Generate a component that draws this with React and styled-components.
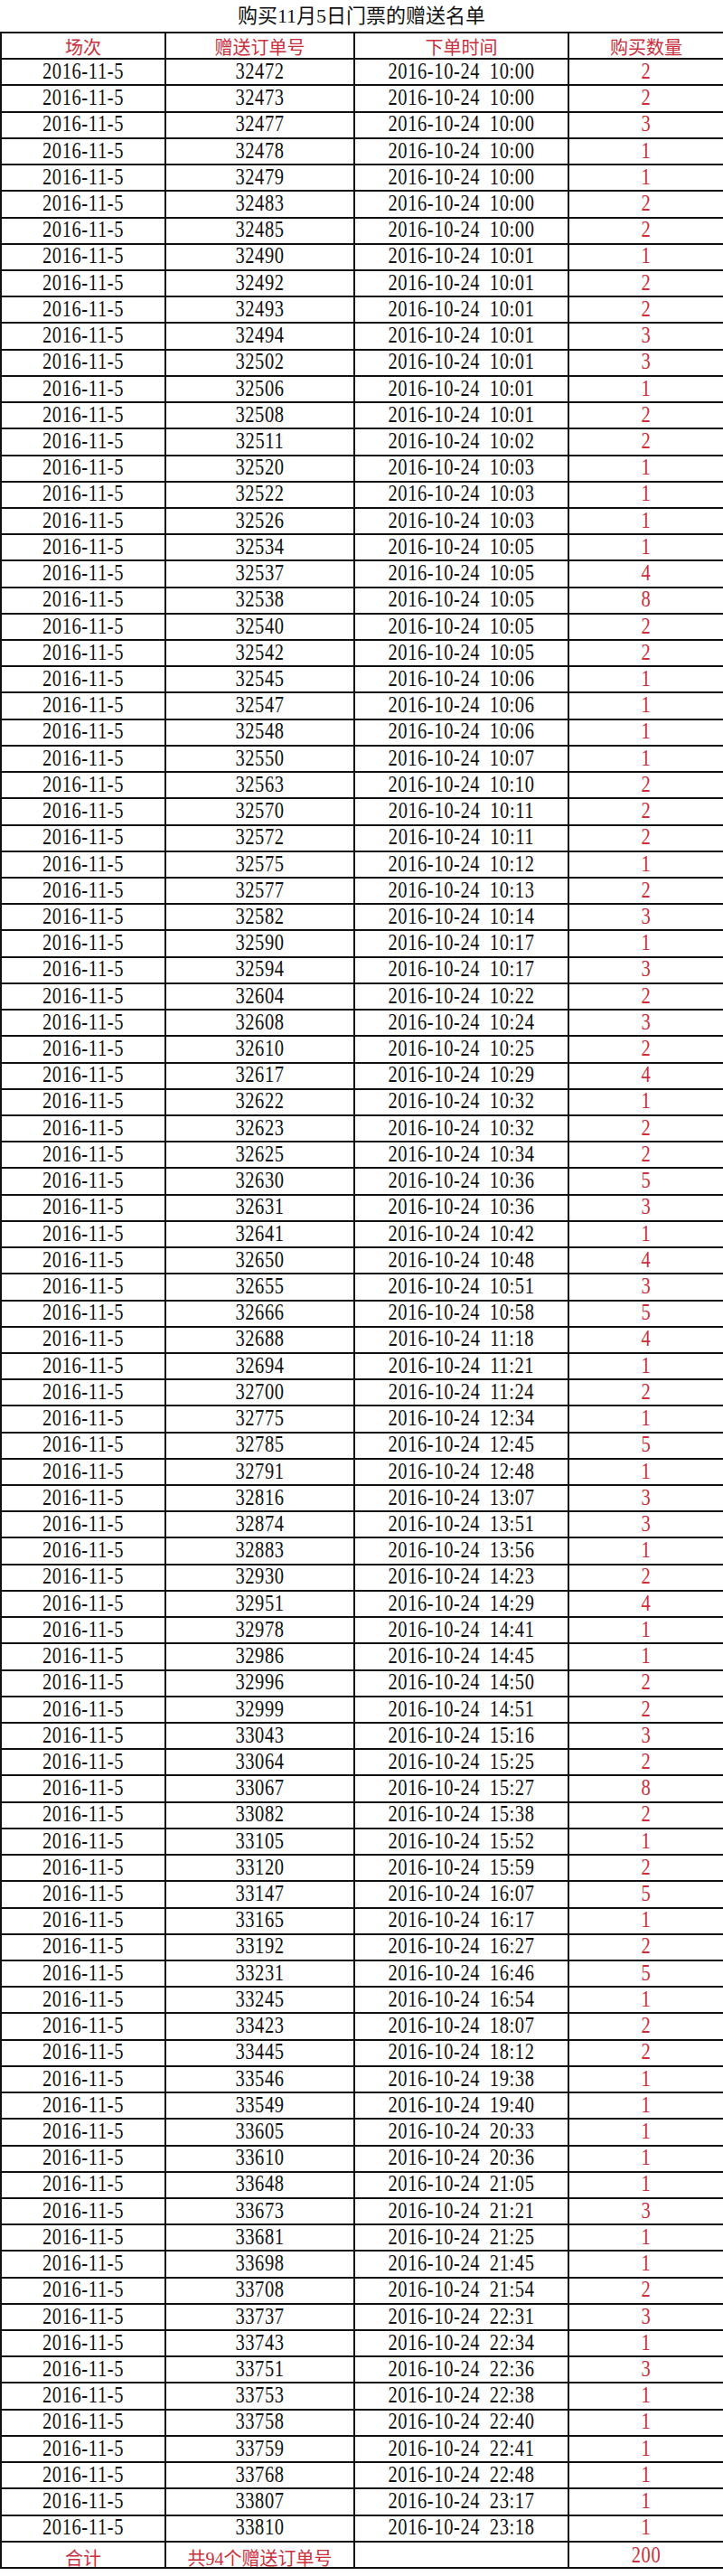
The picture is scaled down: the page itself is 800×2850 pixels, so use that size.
import React from "react";
import styled, { createGlobalStyle } from "styled-components";

const orders = [
  [32472, "10:00", 2], [32473, "10:00", 2], [32477, "10:00", 3], [32478, "10:00", 1],
  [32479, "10:00", 1], [32483, "10:00", 2], [32485, "10:00", 2], [32490, "10:01", 1],
  [32492, "10:01", 2], [32493, "10:01", 2], [32494, "10:01", 3], [32502, "10:01", 3],
  [32506, "10:01", 1], [32508, "10:01", 2], [32511, "10:02", 2], [32520, "10:03", 1],
  [32522, "10:03", 1], [32526, "10:03", 1], [32534, "10:05", 1], [32537, "10:05", 4],
  [32538, "10:05", 8], [32540, "10:05", 2], [32542, "10:05", 2], [32545, "10:06", 1],
  [32547, "10:06", 1], [32548, "10:06", 1], [32550, "10:07", 1], [32563, "10:10", 2],
  [32570, "10:11", 2], [32572, "10:11", 2], [32575, "10:12", 1], [32577, "10:13", 2],
  [32582, "10:14", 3], [32590, "10:17", 1], [32594, "10:17", 3], [32604, "10:22", 2],
  [32608, "10:24", 3], [32610, "10:25", 2], [32617, "10:29", 4], [32622, "10:32", 1],
  [32623, "10:32", 2], [32625, "10:34", 2], [32630, "10:36", 5], [32631, "10:36", 3],
  [32641, "10:42", 1], [32650, "10:48", 4], [32655, "10:51", 3], [32666, "10:58", 5],
  [32688, "11:18", 4], [32694, "11:21", 1], [32700, "11:24", 2], [32775, "12:34", 1],
  [32785, "12:45", 5], [32791, "12:48", 1], [32816, "13:07", 3], [32874, "13:51", 3],
  [32883, "13:56", 1], [32930, "14:23", 2], [32951, "14:29", 4], [32978, "14:41", 1],
  [32986, "14:45", 1], [32996, "14:50", 2], [32999, "14:51", 2], [33043, "15:16", 3],
  [33064, "15:25", 2], [33067, "15:27", 8], [33082, "15:38", 2], [33105, "15:52", 1],
  [33120, "15:59", 2], [33147, "16:07", 5], [33165, "16:17", 1], [33192, "16:27", 2],
  [33231, "16:46", 5], [33245, "16:54", 1], [33423, "18:07", 2], [33445, "18:12", 2],
  [33546, "19:38", 1], [33549, "19:40", 1], [33605, "20:33", 1], [33610, "20:36", 1],
  [33648, "21:05", 1], [33673, "21:21", 3], [33681, "21:25", 1], [33698, "21:45", 1],
  [33708, "21:54", 2], [33737, "22:31", 3], [33743, "22:34", 1], [33751, "22:36", 3],
  [33753, "22:38", 1], [33758, "22:40", 1], [33759, "22:41", 1], [33768, "22:48", 1],
  [33807, "23:17", 1], [33810, "23:18", 1],
];

const RED = "#c9303c";

const GlobalStyle = createGlobalStyle`
  html, body {
    margin: 0;
    padding: 0;
    background: #fff;
  }
  body {
    font-family: "Liberation Serif", "Noto Sans CJK SC", serif;
    color: #111;
  }
`;

const Page = styled.div`
  width: 800px;
`;

const Title = styled.h1`
  margin: 0;
  height: 35px;
  display: flex;
  align-items: center;
  justify-content: center;
  font-size: 22px;
  font-weight: normal;
  line-height: 1;
  padding-top: 1px;
  box-sizing: border-box;
`;

const Sheet = styled.div`
  display: grid;
  grid-template-columns: 182px 209px 237px 172px;
  grid-auto-rows: 29.22px;
  border-top: 2px solid #111;
  border-left: 2px solid #111;
  box-sizing: border-box;
  width: 800px;
`;

const Cell = styled.div`
  box-sizing: border-box;
  border-right: 2px solid #111;
  border-bottom: 2px solid #111;
  display: flex;
  align-items: flex-end;
  justify-content: center;
  overflow: hidden;
  color: ${(p) => (p.$red ? RED : "#111")};
  padding-bottom: ${(p) => (p.$foot ? "0" : "1px")};
`;

const Words = styled.span`
  display: inline-block;
  font-size: 20px;
  line-height: 1;
  transform: ${(p) => (p.$foot ? "translateY(1px)" : "none")};
`;

const Figures = styled.span`
  display: inline-block;
  font-size: 20.5px;
  line-height: 1;
  letter-spacing: 0.6px;
  word-spacing: 5px;
  white-space: pre;
  transform: scaleY(1.2);
  transform-origin: 50% 100%;
  margin-bottom: 1px;
`;

const headers = ["场次", "赠送订单号", "下单时间", "购买数量"];

export default function App() {
  return (
    <Page>
      <GlobalStyle />
      <Title>购买11月5日门票的赠送名单</Title>
      <Sheet>
        {headers.map((h) => (
          <Cell key={h} $red>
            <Words>{h}</Words>
          </Cell>
        ))}
        {orders.map(([id, time, qty]) => (
          <React.Fragment key={id}>
            <Cell>
              <Figures>2016-11-5</Figures>
            </Cell>
            <Cell>
              <Figures>{id}</Figures>
            </Cell>
            <Cell>
              <Figures>{`2016-10-24 ${time}`}</Figures>
            </Cell>
            <Cell $red>
              <Figures>{qty}</Figures>
            </Cell>
          </React.Fragment>
        ))}
        <Cell $red $foot>
          <Words $foot>合计</Words>
        </Cell>
        <Cell $red $foot>
          <Words $foot>共94个赠送订单号</Words>
        </Cell>
        <Cell $foot />
        <Cell $red $foot>
          <Figures>{orders.reduce((s, o) => s + o[2], 0)}</Figures>
        </Cell>
      </Sheet>
    </Page>
  );
}
